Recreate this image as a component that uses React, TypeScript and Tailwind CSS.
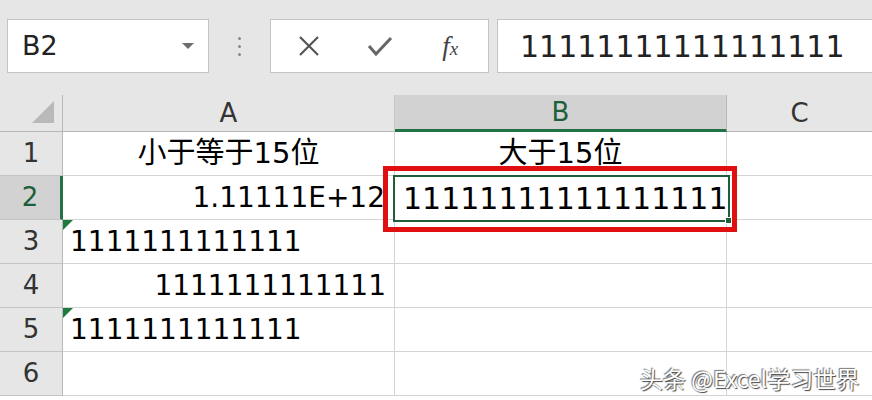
import React from "react";

const F = '"DejaVu Sans", "Noto Sans CJK SC", sans-serif';

function Tri() {
  return (
    <div className="absolute left-0 top-0 w-0 h-0 border-t-[10px] border-t-[#1f7a3e] border-r-[10px] border-r-transparent" />
  );
}

export default function App() {
  const rows: { n: number; a: React.ReactNode; b: React.ReactNode }[] = [
    {
      n: 1,
      a: <div className="flex-1 text-center text-[29px]">小于等于15位</div>,
      b: <div className="flex-1 text-center text-[29px]">大于15位</div>,
    },
    {
      n: 2,
      a: <div className="flex-1 text-right pr-[9px]">1.11111E+12</div>,
      b: null,
    },
    {
      n: 3,
      a: <div className="flex-1 text-left pl-[7px] whitespace-nowrap">1111111111111</div>,
      b: null,
    },
    {
      n: 4,
      a: <div className="flex-1 text-right pr-[8px]">1111111111111</div>,
      b: null,
    },
    {
      n: 5,
      a: <div className="flex-1 text-left pl-[7px] whitespace-nowrap">1111111111111</div>,
      b: null,
    },
    { n: 6, a: null, b: null },
  ];

  return (
    <div className="w-[872px] h-[400px] overflow-hidden bg-white relative" style={{ fontFamily: F }}>
      {/* toolbar */}
      <div className="h-[95px] bg-[#e6e6e6] flex items-start pt-[19px] pl-[7px]">
        <div className="w-[202px] h-[54px] bg-white border border-[#c4c4c4] flex items-center pl-[14px] pr-[14px]">
          <span className="text-[27px] text-[#222] flex-1">B2</span>
          <div className="w-0 h-0 border-l-[6px] border-l-transparent border-r-[6px] border-r-transparent border-t-[6px] border-t-[#6e6e6e]" />
        </div>
        <div className="w-[61px] h-[54px] flex flex-col items-center justify-center gap-[5px]">
          <div className="w-[3px] h-[3px] rounded-full bg-[#888]" />
          <div className="w-[3px] h-[3px] rounded-full bg-[#888]" />
          <div className="w-[3px] h-[3px] rounded-full bg-[#888]" />
        </div>
        <div className="w-[219px] h-[54px] bg-white border border-[#c4c4c4] flex items-center">
          <div className="w-[76px] flex justify-center">
            <svg width="22" height="22" viewBox="0 0 22 22">
              <path d="M2 2 L20 20 M20 2 L2 20" stroke="#555" strokeWidth="2.2" fill="none" />
            </svg>
          </div>
          <div className="w-[66px] flex justify-center">
            <svg width="26" height="22" viewBox="0 0 26 22">
              <path d="M2 11 L9 19 L24 3" stroke="#666" strokeWidth="3" fill="none" strokeLinejoin="miter" />
            </svg>
          </div>
          <div className="w-[76px] flex justify-center">
            <span className="text-[27px] italic text-[#444]" style={{ fontFamily: '"Liberation Serif", serif' }}>
              f<span className="text-[19px]">x</span>
            </span>
          </div>
        </div>
        <div className="ml-[8px] flex-1 h-[54px] bg-white border border-[#c4c4c4] border-r-0 flex items-center pl-[22px]">
          <span className="text-[30px] text-[#222]">11111111111111111</span>
        </div>
      </div>

      {/* grid */}
      <div className="relative">
        {/* header row */}
        <div className="flex h-[37px] bg-[#e6e6e6]">
          <div className="w-[63px] border-r border-r-[#b8b8b8] border-b border-b-[#b8b8b8] relative">
            <div className="absolute right-[8px] bottom-[8px] w-0 h-0 border-l-[22px] border-l-transparent border-b-[22px] border-b-[#b9b9b9]" />
          </div>
          <div className="w-[332px] border-r border-r-[#c8c8c8] border-b border-b-[#b8b8b8] flex items-center justify-center text-[26px] text-[#333]">A</div>
          <div className="w-[332px] bg-[#d2d2d2] border-r border-r-[#b8b8b8] border-b-[3px] border-b-[#217346] flex items-center justify-center text-[26px] text-[#1d5f3a]">B</div>
          <div className="flex-1 border-b border-b-[#b8b8b8] flex items-center justify-center text-[26px] text-[#333]">C</div>
        </div>
        {rows.map((r) => (
          <div key={r.n} className="flex h-[44px]">
            <div
              className={`w-[63px] flex items-center justify-center text-[26px] border-b border-b-[#c4c4c4] ${
                r.n === 2 ? "bg-[#d2d2d2] text-[#1d5f3a] border-r-[3px] border-r-[#217346]" : "bg-[#e6e6e6] text-[#333] border-r border-r-[#b8b8b8]"
              }`}
            >
              {r.n}
            </div>
            <div className="w-[332px] relative flex items-center text-[28px] text-black border-r border-r-[#d4d4d4] border-b border-b-[#d4d4d4] whitespace-nowrap overflow-visible">
              {(r.n === 3 || r.n === 5) && <Tri />}
              {r.a}
            </div>
            <div className="w-[332px] flex items-center text-[28px] text-black border-r border-r-[#d4d4d4] border-b border-b-[#d4d4d4]">
              {r.b}
            </div>
            <div className="flex-1 border-b border-b-[#d4d4d4]" />
          </div>
        ))}

        {/* selection B2 */}
        <div className="absolute left-[393px] top-[80px] w-[337px] h-[47px] border-[2px] border-[#1e5e3a] flex items-center pl-[8px] text-[30px] text-black bg-white whitespace-nowrap">
          11111111111111111
          <div className="absolute right-[-4px] bottom-[-4px] w-[7px] h-[7px] bg-[#1e5e3a] border border-white" />
        </div>
        {/* red highlight */}
        <div className="absolute left-[383px] top-[71px] w-[354px] h-[66px] border-[5px] border-[#e01010]" />
      </div>

      {/* watermark */}
      <div
        className="absolute left-[640px] top-[361px] text-[23px] text-white [text-shadow:1px_1px_1px_#444,-1px_-1px_1px_#777]"
        style={{ fontFamily: '"Noto Sans CJK SC", sans-serif' }}
      >
        头条 @Excel学习世界
      </div>
    </div>
  );
}
